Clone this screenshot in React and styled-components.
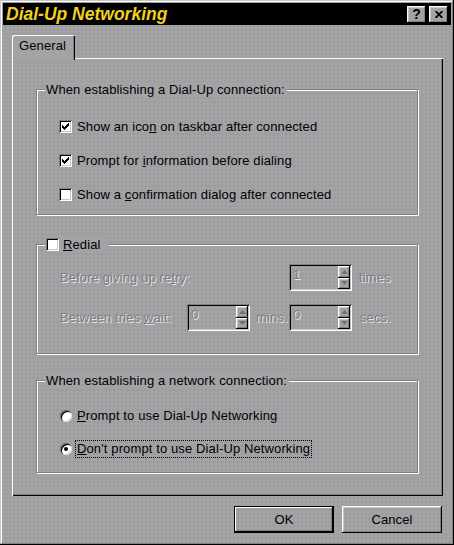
import React from "react";
import styled, { createGlobalStyle } from "styled-components";

const face = "#a3a3a6";

const raised = `box-shadow: inset -1px -1px #000, inset 1px 1px #fff, inset -2px -2px #808080, inset 2px 2px #c8c8cb;`;
const sunken = `box-shadow: inset 1px 1px #808080, inset -1px -1px #fff, inset 2px 2px #000, inset -2px -2px #c8c8cb;`;

const GlobalStyle = createGlobalStyle`
  html, body { margin: 0; padding: 0; background: ${face}; }
  body {
    font-family: "Liberation Sans", Arial, sans-serif;
    font-size: 13px;
    letter-spacing: 0.12px;
    color: #000;
  }
  * { box-sizing: border-box; }
`;

const Window = styled.div`
  width: 454px;
  height: 545px;
  padding: 3px;
  background-color: ${face};
  background-image: radial-gradient(circle, #96969a 0.6px, transparent 0.9px);
  background-size: 4px 4px;
  display: flex;
  flex-direction: column;
  box-shadow: inset -1px -1px #000, inset 1px 1px #c8c8cb, inset -2px -2px #808080, inset 2px 2px #fff;
`;

const TitleBar = styled.div`
  height: 22px;
  background: #000;
  display: flex;
  align-items: center;
  justify-content: space-between;
  padding: 0 3px 0 3px;
`;

const Title = styled.h1`
  margin: 0;
  font: italic bold 17.5px "Liberation Sans", Arial, sans-serif;
  letter-spacing: 0;
  color: #f2cf1e;
`;

const TitleButtons = styled.div`
  display: flex;
  gap: 3px;
`;

const TitleButton = styled.button`
  width: 19px;
  height: 17px;
  padding: 0;
  border: 0;
  background: ${face};
  ${raised}
  display: flex;
  align-items: center;
  justify-content: center;
  font: bold 14px "Liberation Sans", Arial, sans-serif;
  color: #000;
`;

const Body = styled.div`
  flex: 1;
  display: flex;
  flex-direction: column;
  padding: 10px 8px 9px 9px;
`;

const TabStrip = styled.div`
  display: flex;
  height: 23px;
  position: relative;
  z-index: 1;
`;

const Tab = styled.div`
  width: 63px;
  height: 25px;
  padding: 3px 0 0 7px;
  line-height: 15px;
  background: inherit;
  background-color: ${face};
  border-radius: 2px 2px 0 0;
  box-shadow: inset 1px 1px #fff, inset -1px 0 #000, inset -2px 0 #808080;
`;

const Panel = styled.div`
  height: 438px;
  padding: 24px 25px 0 24px;
  display: flex;
  flex-direction: column;
  box-shadow: inset 1px 1px #fff, inset -1px -1px #000, inset -2px -2px #808080;
`;

const Group = styled.fieldset`
  margin: ${(p) => p.$top}px 0 0;
  padding: 0;
  min-width: 0;
  border: 1px solid #808080;
  box-shadow: 1px 1px 0 #fff, inset 1px 1px 0 #fff;
`;

const Legend = styled.legend`
  margin-left: 8px;
  padding: 0 ${(p) => p.$padR ?? 2}px 0 1px;
  line-height: 15px;
  background: ${face};
  display: flex;
  align-items: center;
  gap: 4px;
`;

const Stack = styled.div`
  display: flex;
  flex-direction: column;
  gap: ${(p) => p.$gap}px;
  padding: ${(p) => p.$pad};
`;

const Option = styled.label`
  display: flex;
  align-items: center;
  gap: ${(p) => p.$gap ?? 5}px;
  height: 20px;
`;

const Box = styled.span`
  width: 13px;
  height: 13px;
  flex: none;
  background: #fff;
  ${sunken}
  display: flex;
  align-items: center;
  justify-content: center;
`;

const Round = styled.span`
  width: 12px;
  height: 12px;
  flex: none;
  border-radius: 50%;
  background: #fff;
  box-shadow: inset 1px 1px #808080, inset 2px 2px #000, inset -1px -1px #dcdcdc;
  display: flex;
  align-items: center;
  justify-content: center;
  &::after {
    content: "";
    width: 4px;
    height: 4px;
    border-radius: 50%;
    background: ${(p) => (p.$on ? "#000" : "transparent")};
  }
`;

const RadioText = styled.span`
  padding: 0 1px;
  line-height: 16px;
  border: 1px dotted ${(p) => (p.$focus ? "#000" : "transparent")};
`;

const Dim = styled.span`
  color: #7c7c80;
  text-shadow: 1px 1px 0 #e8e8ea;
`;

const RedialGrid = styled.div`
  display: grid;
  grid-template-columns: 127px 63px 39px 63px auto;
  row-gap: 13px;
  align-items: center;
  padding: 12px 0 22px 23px;
`;

const Unit = styled(Dim)`
  padding-left: ${(p) => p.$pad}px;
`;

const Spin = styled.div`
  height: 27px;
  padding: 2px;
  display: flex;
  ${sunken}
`;

const SpinValue = styled(Dim)`
  flex: 1;
  padding: 1px 2px;
  line-height: 15px;
`;

const SpinArrows = styled.div`
  width: 12px;
  display: flex;
  flex-direction: column;
`;

const SpinArrow = styled.span`
  flex: 1;
  background: ${face};
  ${raised}
  display: flex;
  align-items: center;
  justify-content: center;
`;

const Footer = styled.div`
  display: flex;
  justify-content: flex-end;
  gap: 8px;
  margin-top: 10px;
  padding-right: 1px;
`;

const PushButton = styled.button`
  width: 100px;
  height: 27px;
  padding: 0;
  border: 0;
  background: transparent;
  font: 13px "Liberation Sans", Arial, sans-serif;
  letter-spacing: 0.12px;
  color: #000;
  ${(p) =>
    p.$default
      ? "box-shadow: inset 0 0 0 1px #000, inset -2px -2px #000, inset 2px 2px #fff, inset -3px -3px #808080;"
      : raised}
`;

const Check = () => (
  <svg width="7" height="7" viewBox="0 0 7 7" shapeRendering="crispEdges">
    <path
      d="M0 2h1v3h-1zM1 3h1v3h-1zM2 4h1v3h-1zM3 3h1v3h-1zM4 2h1v3h-1zM5 1h1v3h-1zM6 0h1v3h-1z"
      fill="#000"
    />
  </svg>
);

const Tri = ({ down }) => (
  <svg width="7" height="4" viewBox="0 0 7 4">
    <path d={down ? "M0 0h7L3.5 4z" : "M3.5 0L7 4H0z"} fill="#707074" />
  </svg>
);

const SpinBox = ({ value }) => (
  <Spin>
    <SpinValue>{value}</SpinValue>
    <SpinArrows>
      <SpinArrow>
        <Tri />
      </SpinArrow>
      <SpinArrow>
        <Tri down />
      </SpinArrow>
    </SpinArrows>
  </Spin>
);

const CheckOption = ({ checked, children }) => (
  <Option>
    <Box>{checked && <Check />}</Box>
    <span>{children}</span>
  </Option>
);

const RadioOption = ({ on, focus, children }) => (
  <Option $gap={3}>
    <Round $on={on} />
    <RadioText $focus={focus}>{children}</RadioText>
  </Option>
);

export default function App() {
  return (
    <>
      <GlobalStyle />
      <Window>
        <TitleBar>
          <Title>Dial-Up Networking</Title>
          <TitleButtons>
            <TitleButton>?</TitleButton>
            <TitleButton>
              <svg width="8" height="7" viewBox="0 0 8 7">
                <path d="M0.5 0L7.5 7M7.5 0L0.5 7" stroke="#000" strokeWidth="1.8" />
              </svg>
            </TitleButton>
          </TitleButtons>
        </TitleBar>
        <Body>
          <TabStrip>
            <Tab>General</Tab>
          </TabStrip>
          <Panel>
            <Group $top={0}>
              <Legend>When establishing a Dial-Up connection:</Legend>
              <Stack $gap={14} $pad="19px 0 10px 22px">
                <CheckOption checked>
                  Show an ico<u>n</u> on taskbar after connected
                </CheckOption>
                <CheckOption checked>
                  Prompt for <u>i</u>nformation before dialing
                </CheckOption>
                <CheckOption>
                  Show a <u>c</u>onfirmation dialog after connected
                </CheckOption>
              </Stack>
            </Group>

            <Group $top={22}>
              <Legend $padR={8}>
                <Box />
                <span>
                  <u>R</u>edial
                </span>
              </Legend>
              <RedialGrid>
                <Dim style={{ gridColumn: "1 / 4" }}>
                  Before giving up re<u>t</u>ry:
                </Dim>
                <SpinBox value="1" />
                <Unit $pad={7}>times</Unit>
                <Dim>
                  Between tries <u>w</u>ait:
                </Dim>
                <SpinBox value="0" />
                <Unit $pad={6}>mins.</Unit>
                <SpinBox value="0" />
                <Unit $pad={8}>secs.</Unit>
              </RedialGrid>
            </Group>

            <Group $top={19}>
              <Legend>When establishing a network connection:</Legend>
              <Stack $gap={13} $pad="18px 0 13px 23px">
                <RadioOption>
                  <u>P</u>rompt to use Dial-Up Networking
                </RadioOption>
                <RadioOption on focus>
                  <u>D</u>on't prompt to use Dial-Up Networking
                </RadioOption>
              </Stack>
            </Group>
          </Panel>
          <Footer>
            <PushButton $default>OK</PushButton>
            <PushButton>Cancel</PushButton>
          </Footer>
        </Body>
      </Window>
    </>
  );
}
